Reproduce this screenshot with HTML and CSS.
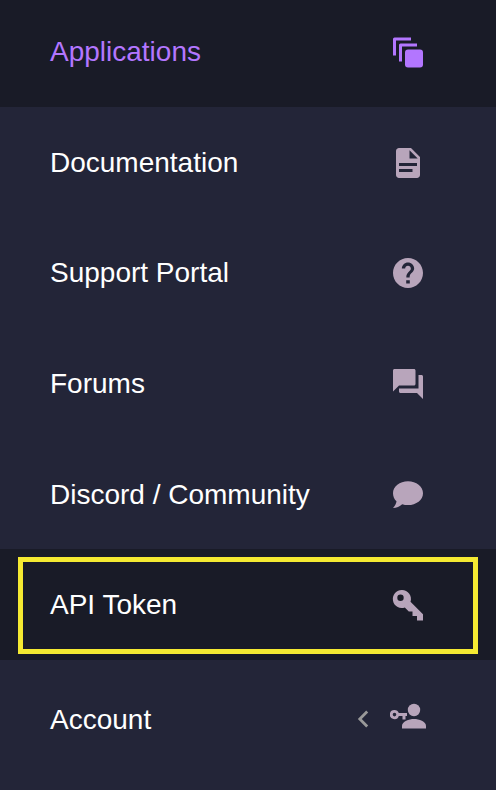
FILE: index.html
```html
<!DOCTYPE html>
<html lang="en">
<head>
<meta charset="utf-8">
<title>Menu</title>
<link rel="stylesheet" href="styles.css">
</head>
<body>
<nav class="menu">
  <a class="item item-first active"><span class="label">Applications</span>
    <svg class="icon" viewBox="0 0 36 36"><path d="M3 21.500V5a1.500 1.500 0 0 1 1.500-1.500H21v3H6v15zM9 27.500V11a1.500 1.500 0 0 1 1.500-1.500H27v3H12v15z"/><rect x="15" y="15.500" width="18" height="18" rx="3"/></svg></a>
  <a class="item"><span class="label">Documentation</span>
    <svg class="icon" viewBox="0 0 24 24"><path d="M14 2H6C4.900 2 4 2.900 4 4v16c0 1.100.9 2 2 2h12c1.100 0 2-.9 2-2V8zM15 18H6v-2h9zM18 14H6v-2h12zM13 9V3.500L18.500 9z" fill-rule="evenodd"/></svg></a>
  <a class="item"><span class="label">Support Portal</span>
    <svg class="icon" viewBox="0 0 24 24"><path d="M12 2C6.480 2 2 6.480 2 12s4.480 10 10 10 10-4.480 10-10S17.520 2 12 2zm1.200 17h-2.400v-2.200h2.400zm1.870-7.750l-.9.920C13.450 12.900 13.100 13.500 13.100 15h-2.200v-.5c0-1.100.450-2.100 1.170-2.830l1.240-1.260c.370-.360.590-.860.590-1.410 0-1.050-.85-1.900-1.900-1.900s-1.900.85-1.900 1.900H7.900C7.900 6.790 9.790 5 12 5s4.100 1.790 4.100 4c0 .880-.460 1.680-1.030 2.250z" fill-rule="evenodd"/></svg></a>
  <a class="item"><span class="label">Forums</span>
    <svg class="icon" viewBox="0 0 24 24"><path d="M21 6h-2v9H6v2c0 .550.450 1 1 1h11l4 4V7c0-.550-.450-1-1-1zm-4 6V3c0-.550-.450-1-1-1H3c-.550 0-1 .450-1 1v14l4-4h10c.550 0 1-.450 1-1z"/></svg></a>
  <a class="item item-community"><span class="label">Discord / Community</span>
    <svg class="icon" viewBox="0 0 36 36"><path d="M18 4.300c8.300 0 15 5.300 15 11.900s-6.700 11.900-15 11.900c-2.100 0-4-.3-5.800-.9-2.500 2.100-5.600 3.800-9.200 3.800 2.200-2.200 3.300-4.600 3.500-6.700C4.300 22.200 3 19.300 3 16.200 3 9.600 9.700 4.300 18 4.300z"/></svg></a>
  <a class="item highlighted"><span class="label">API Token</span>
    <svg class="icon" viewBox="0 0 36 36"><path fill-rule="evenodd" d="M12 3a9 9 0 0 1 8.500 11.800L33 27.200V33.500h-6V29h-4.500v-4.500H18.800l-4-4A9 9 0 1 1 12 3zm-1.500 4.500a3.200 3.200 0 1 0 0 6.400 3.200 3.200 0 0 0 0-6.400z"/></svg></a>
  <a class="item item-account"><span class="label">Account</span>
    <svg class="chevron" viewBox="0 0 12 18"><path d="M10.200 1.500 2.800 9l7.400 7.500"/></svg>
    <svg class="icon" viewBox="0 0 36 36"><circle cx="24" cy="9" r="6.200"/><path d="M12 27.500v-2.700c0-4.200 7-6.800 12-6.800s12 2.600 12 6.800v2.700z"/><path fill-rule="evenodd" d="M4.500 9a4.600 4.600 0 0 1 4.300 3H17v3h-1.500v3.500h-3V15H8.800A4.600 4.600 0 1 1 4.500 9zm0 2.800a1.800 1.800 0 1 0 0 3.600 1.800 1.800 0 0 0 0-3.600z"/></svg></a>
</nav>
</body>
</html>
```
FILE: styles.css
```css
* { box-sizing: border-box; }

body {
  margin: 0;
  background: #232538;
  font-family: "Liberation Sans", Arial, sans-serif;
  font-size: 28px;
  line-height: 32px;
  color: #fff;
}

.menu {
  display: flex;
  flex-direction: column;
  height: 790px;
  overflow: hidden;
}

.item {
  position: relative;
  display: flex;
  align-items: center;
  flex: none;
  height: 110.5px;
  padding: 1px 70px 0 50px;
}

.item-first {
  height: 107px;
  padding-top: 0;
  padding-bottom: 3px;
}

.item-community {
  padding-top: 2px;
}

.item-account {
  height: 130px;
  padding-top: 0;
  padding-bottom: 11px;
}

.item-account .label {
  padding-top: 2px;
}

.active, .highlighted { background: #191b27; }
.active { color: #b376ff; }

.highlighted::after {
  content: "";
  position: absolute;
  inset: 8px 18px 6px;
  border: 5px solid #f5ea32;
}

.label {
  flex: 1;
  white-space: nowrap;
}

.icon {
  width: 36px;
  height: 36px;
  fill: #b8a5bb;
}

.active .icon { fill: #b376ff; }

.chevron {
  width: 12px;
  height: 18px;
  margin-right: 21px;
  fill: none;
  stroke: #999;
  stroke-width: 2.8;
}
```
